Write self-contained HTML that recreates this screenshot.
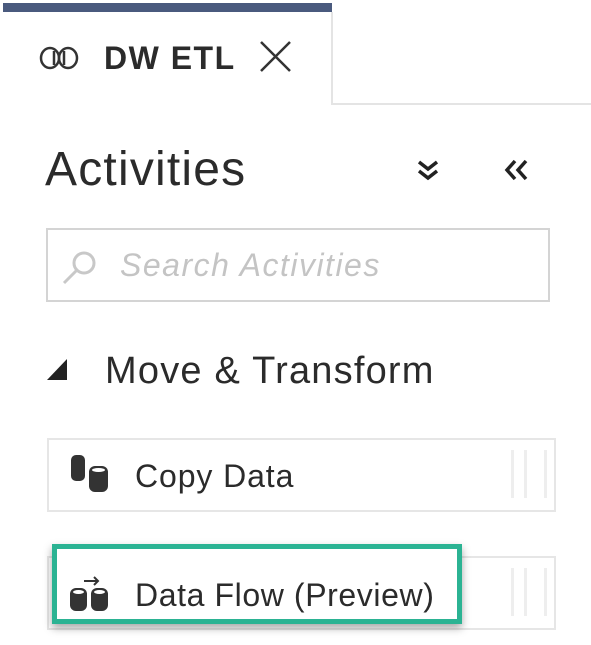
<!DOCTYPE html>
<html><head><meta charset="utf-8"><style>
body{margin:0;width:591px;height:645px;background:#fff;position:relative;overflow:hidden;font-family:"Liberation Sans",sans-serif;color:#2b2b2b}
.a{position:absolute}
</style></head><body>
<div class="a" style="left:3px;top:3px;width:329px;height:9px;background:#4a5a7e"></div>
<div class="a" style="left:331px;top:12px;width:2px;height:92px;background:#e4e4e4"></div>
<div class="a" style="left:331px;top:103px;width:260px;height:2px;background:#e4e4e4"></div>
<svg class="a" style="left:38px;top:44px" width="44" height="28" viewBox="0 0 44 28" fill="none" stroke="#333" stroke-width="2.5"><ellipse cx="12" cy="14" rx="9" ry="10"/><ellipse cx="30" cy="14" rx="9" ry="10"/><line x1="16" y1="7" x2="16" y2="21"/><line x1="26" y1="7" x2="26" y2="21"/></svg>
<div class="a" style="left:104px;top:40px;font-size:32px;font-weight:bold;color:#2b2b2b;letter-spacing:1.5px">DW ETL</div>
<svg class="a" style="left:258px;top:40px" width="36" height="34"><path d="M3 2L32 31M32 2L3 31" stroke="#333" stroke-width="2.5"/></svg>
<div class="a" style="left:45px;top:142px;font-size:48px;color:#2b2b2b;letter-spacing:1.2px">Activities</div>
<svg class="a" style="left:416px;top:158px" width="24" height="26" fill="none" stroke="#222" stroke-width="3.5"><path d="M3 4L12 11L21 4M3 13L12 20L21 13"/></svg>
<svg class="a" style="left:502px;top:158px" width="28" height="26" fill="none" stroke="#222" stroke-width="3.5"><path d="M13 3L5 12L13 21M24 3L16 12L24 21"/></svg>
<div class="a" style="left:46px;top:228px;width:500px;height:70px;border:2px solid #d4d4d4"></div>
<svg class="a" style="left:60px;top:248px" width="40" height="40" fill="none" stroke="#c8c8c8" stroke-width="3"><circle cx="24" cy="15" r="10"/><path d="M17 22L4 35"/></svg>
<div class="a" style="left:120px;top:247px;font-size:32px;font-style:italic;color:#c4c4c4;letter-spacing:1.5px">Search Activities</div>
<svg class="a" style="left:46px;top:358px" width="24" height="24"><path d="M21 1L21 22L1 22Z" fill="#222"/></svg>
<div class="a" style="left:105px;top:350px;font-size:38px;color:#2b2b2b;letter-spacing:1.2px">Move &amp; Transform</div>
<div class="a" style="left:47px;top:438px;width:505px;height:70px;border:2px solid #e6e6e6"></div>
<svg class="a" style="left:68px;top:453px" width="46" height="42" fill="#333"><rect x="3" y="2" width="14" height="26" rx="5"/><rect x="21" y="13" width="19" height="26" rx="6"/><ellipse cx="30.5" cy="17" rx="6.5" ry="2" fill="#fff"/></svg>
<div class="a" style="left:135px;top:458px;font-size:32px;color:#2b2b2b;letter-spacing:0.9px">Copy Data</div>
<div class="a" style="left:511px;top:450px;width:30px;height:48px;border-left:3px solid #eee;border-right:3px solid #eee"></div>
<div class="a" style="left:524px;top:450px;width:3px;height:48px;background:#eee"></div>
<div class="a" style="left:47px;top:556px;width:505px;height:70px;border:2px solid #e6e6e6"></div>
<div class="a" style="left:511px;top:568px;width:30px;height:48px;border-left:3px solid #eee;border-right:3px solid #eee"></div>
<div class="a" style="left:524px;top:568px;width:3px;height:48px;background:#eee"></div>
<div class="a" style="left:52px;top:544px;width:400px;height:70px;border:5px solid #2bb393;background:#fff;box-shadow:0 4px 8px rgba(0,0,0,.35)"></div>
<svg class="a" style="left:66px;top:574px" width="50" height="40" fill="#333"><rect x="4" y="14" width="17" height="23" rx="6"/><rect x="25" y="14" width="17" height="23" rx="6"/><ellipse cx="12.5" cy="18" rx="5.5" ry="2" fill="#fff"/><ellipse cx="33.5" cy="18" rx="5.5" ry="2" fill="#fff"/><path d="M18 7H32M28 3L32 7L28 11" stroke="#333" stroke-width="2" fill="none"/></svg>
<div class="a" style="left:135px;top:577px;font-size:32px;color:#2b2b2b;letter-spacing:0.6px">Data Flow (Preview)</div>
</body></html>
